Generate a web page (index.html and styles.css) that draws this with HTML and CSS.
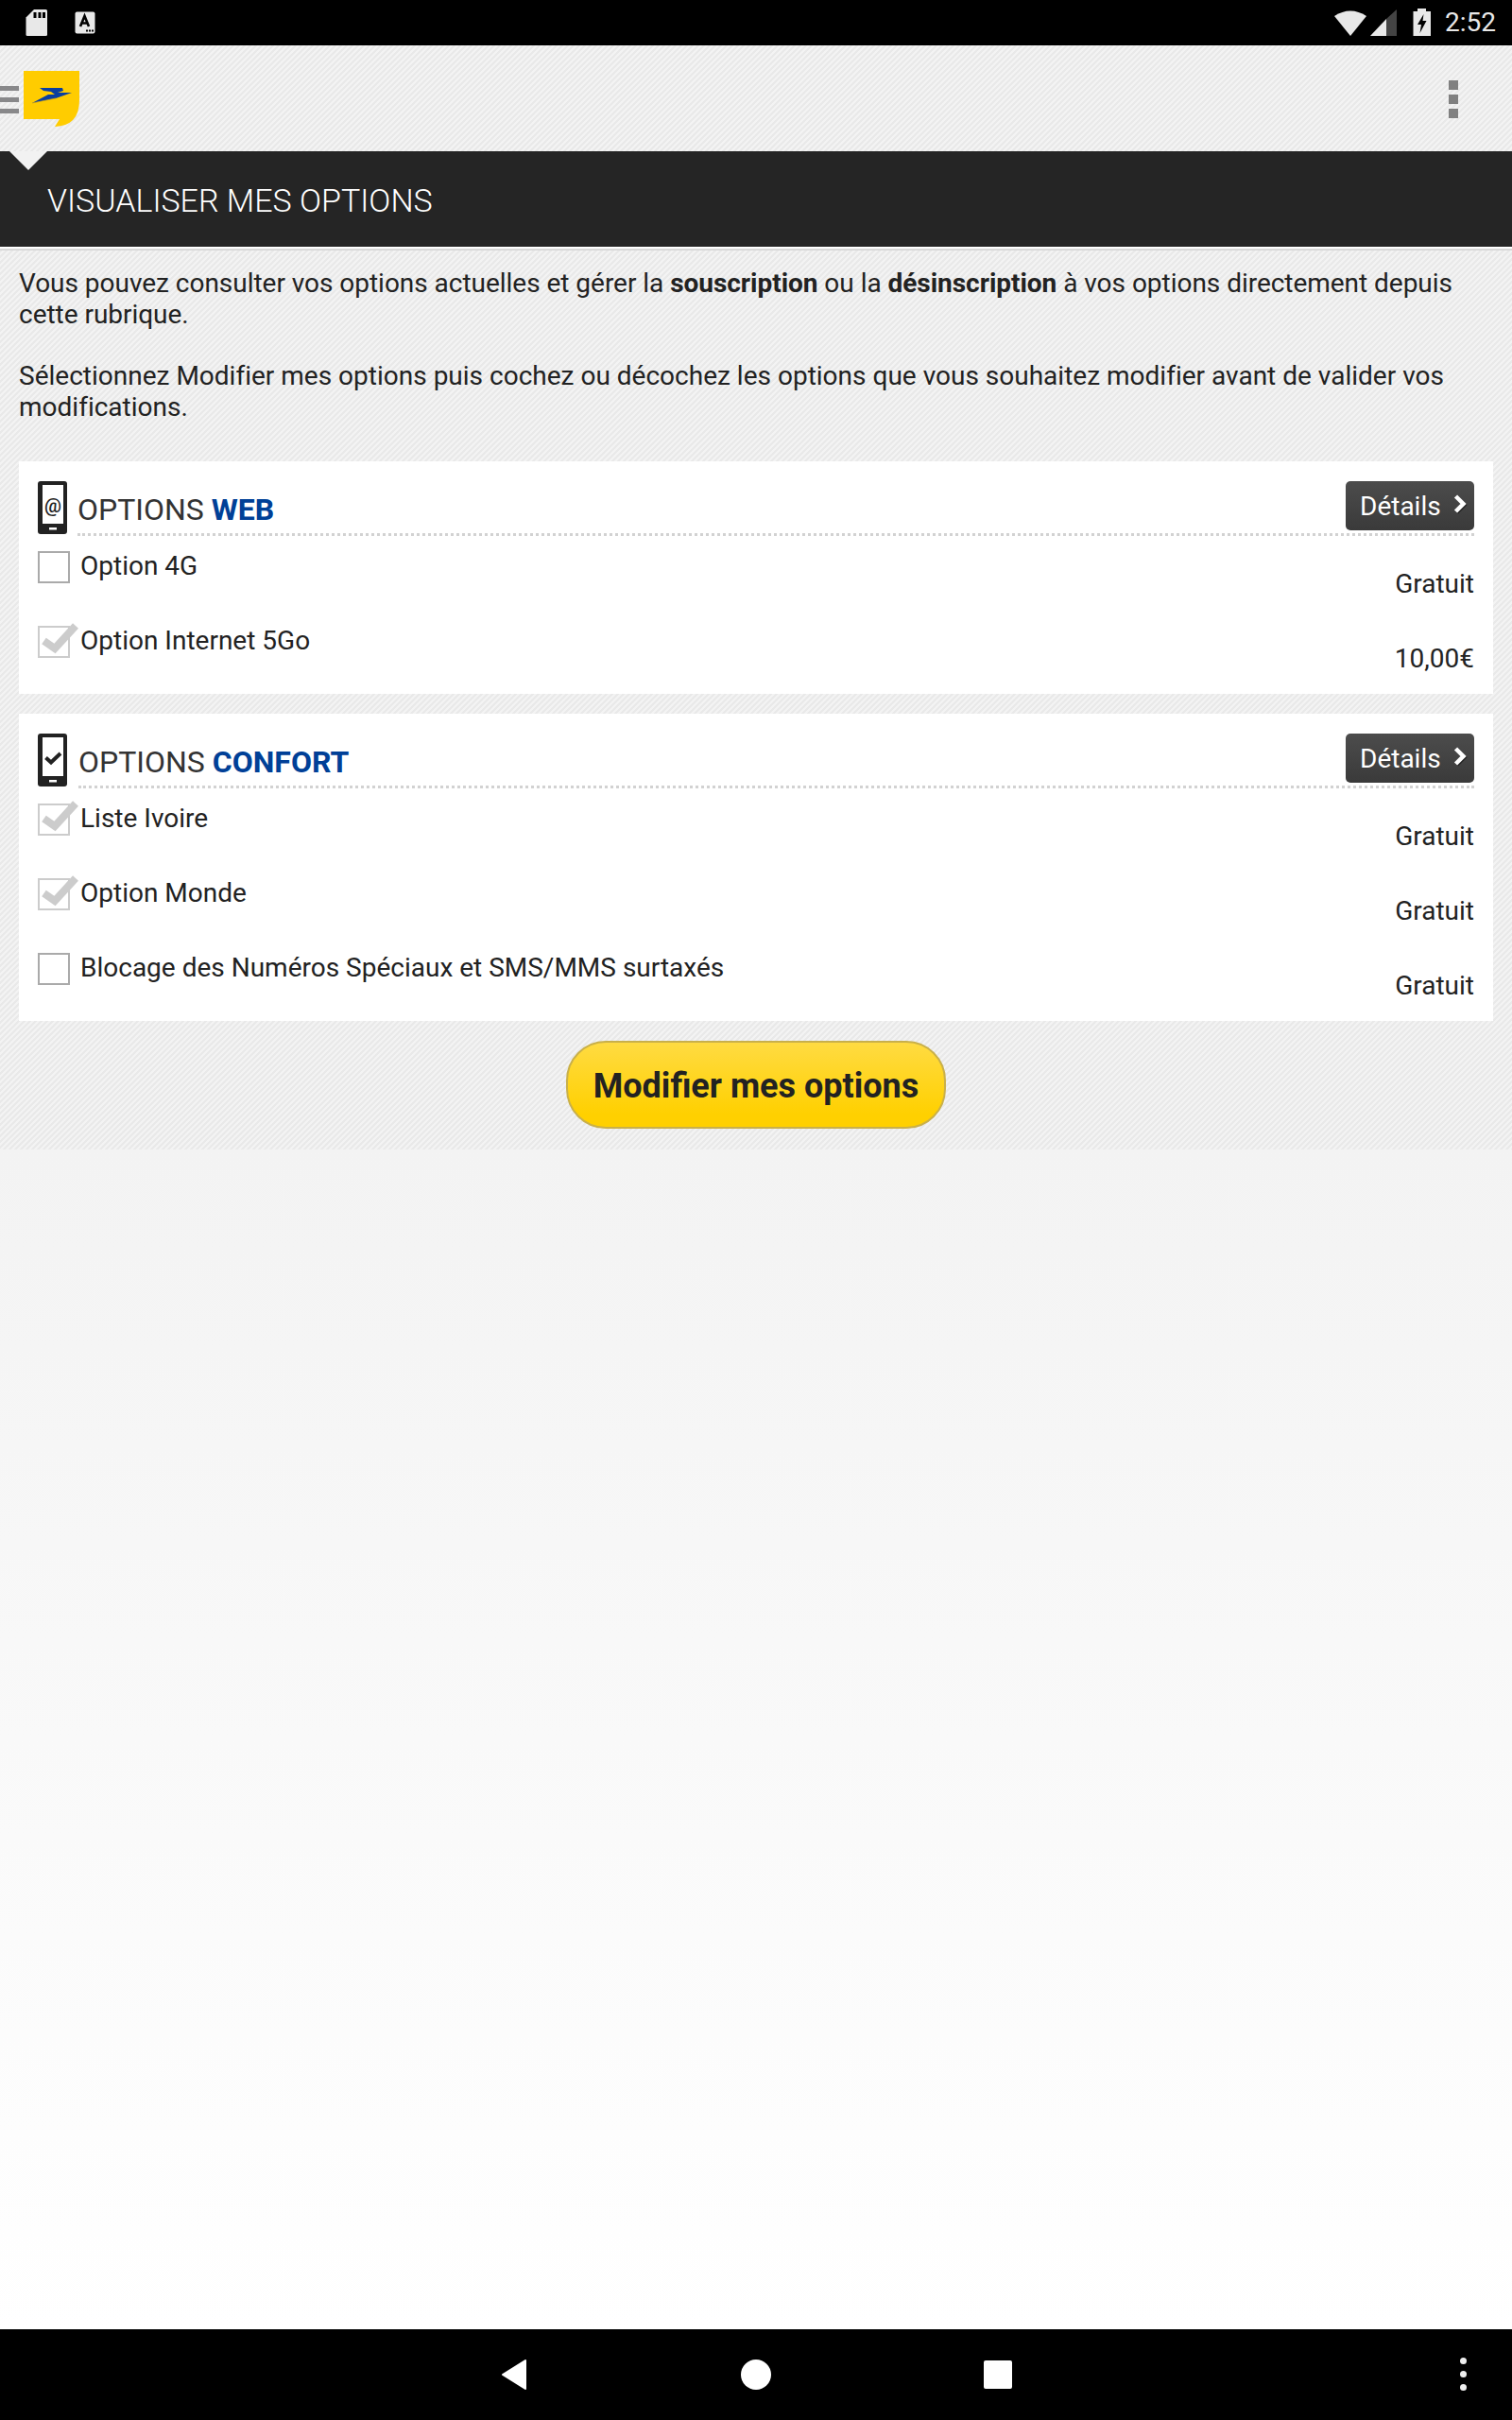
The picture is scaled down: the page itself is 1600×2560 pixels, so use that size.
FILE: index.html
```html
<!DOCTYPE html>
<html lang="fr">
<head>
<meta charset="utf-8">
<title>Visualiser mes options</title>
<link rel="stylesheet" href="styles.css">
</head>
<body>
<div class="app">
  <div class="statusbar">
    <div class="status-left">
      <svg class="ic-sd" width="24" height="28" viewBox="0 0 24 28"><path fill="#e8e8e8" d="M9 0H21.500Q23 0 23 1.500V26.500Q23 28 21.500 28H2Q.5 28 .5 26.500V8.500Z"/><path fill="#000" d="M8.500 3h3v6h-3zM13.500 3h3v6h-3zM18 3h3v6h-3z"/></svg>
      <svg class="ic-a" width="22" height="24" viewBox="0 0 22 24"><rect x=".5" y=".5" width="21" height="23" rx="2" fill="#e8e8e8"/><path fill="none" stroke="#000" stroke-width="2.600" d="M6 16 10.500 5 15 16M7.500 12.500h6"/><path fill="#000" d="M12 19.500h2v2h-2zM15 19.500h2v2h-2zM18 19.500h2v2h-2z"/></svg>
    </div>
    <div class="status-right">
      <svg class="ic-wifi" width="34" height="28" viewBox="0 0 34 28"><path fill="#e8e8e8" d="M0 7Q17-4 34 7L17 28Z"/></svg>
      <svg class="ic-signal" width="30" height="29" viewBox="0 0 30 29"><path fill="#444" d="M28 0V28H17V10Z"/><path fill="#e8e8e8" d="M17 10V28H0Z"/></svg>
      <svg class="ic-batt" width="20" height="30" viewBox="0 0 20 30"><path fill="#e8e8e8" d="M5 0H14V3H19V29H.5V3H5Z"/><path fill="#000" d="M11.500 6 5 17H9L7.500 26 14.500 13H10.500Z"/></svg>
      <span class="clock">2:52</span>
    </div>
  </div>

  <header class="topbar">
    <div class="burger"><i></i><i></i><i></i></div>
    <svg class="logo" width="60" height="60" viewBox="0 0 60 60">
      <path fill="#ffcc00" d="M0 0H59V31Q59 58 33 59L38 51H0Z"/>
      <path fill="#0a3fa0" d="M17 18H41L42 21 36 23 51 23 34 29 9 34 26 25H33L29 22 21 21Z"/>
      <path fill="none" stroke="#c9a21a" stroke-width=".7" d="M9 34 34 29"/>
    </svg>
    <div class="overflow"><i></i><i></i><i></i></div>
  </header>

  <div class="titlebar">
    <span class="notch"></span>
    <h1>VISUALISER MES OPTIONS</h1>
  </div>
  <div class="title-rule"></div>

  <main class="content">
    <p class="intro intro-first">Vous pouvez consulter vos options actuelles et gérer la <b>souscription</b> ou la <b>désinscription</b> à vos options directement depuis cette rubrique.</p>
    <p class="intro intro-second">Sélectionnez Modifier mes options puis cochez ou décochez les options que vous souhaitez modifier avant de valider vos modifications.</p>

    <section class="card">
      <div class="card-head">
        <svg class="phone" width="32" height="56" viewBox="0 0 32 56">
          <rect width="31" height="56" rx="3" fill="#222"/>
          <rect x="5" y="4" width="22" height="41" fill="#fff"/>
          <rect x="12" y="49" width="8" height="2.500" fill="#fff"/>
          <text class="at" x="16" y="33" text-anchor="middle">@</text>
        </svg>
        <h2>OPTIONS <b>WEB</b></h2>
        <a class="details">Détails<svg width="18" height="24" viewBox="0 0 18 24"><path fill="none" stroke="#222" stroke-width="4.500" d="M4.500 4 12.500 12 4.500 20"/><path fill="none" stroke="#fff" stroke-width="4.500" d="M3.500 3 11.500 11 3.500 19"/></svg></a>
      </div>
      <div class="row"><label><span class="box"></span>Option 4G</label><span class="price">Gratuit</span></div>
      <div class="row"><label><span class="box on"><svg viewBox="0 0 42 38" width="42" height="38"><path fill="none" stroke="#ccc" stroke-width="8" d="M6.500 20 18 28 40 4"/></svg></span>Option Internet 5Go</label><span class="price">10,00€</span></div>
    </section>

    <section class="card">
      <div class="card-head">
        <svg class="phone phone-check" width="32" height="56" viewBox="0 0 32 56">
          <rect width="31" height="56" rx="3" fill="#222"/>
          <rect x="5" y="4" width="22" height="41" fill="#fff"/>
          <rect x="12" y="49" width="8" height="2.500" fill="#fff"/>
          <path fill="none" stroke="#222" stroke-width="4" d="M8.500 25.500 14 30.500 24 21"/>
        </svg>
        <h2>OPTIONS <b>CONFORT</b></h2>
        <a class="details">Détails<svg width="18" height="24" viewBox="0 0 18 24"><path fill="none" stroke="#222" stroke-width="4.500" d="M4.500 4 12.500 12 4.500 20"/><path fill="none" stroke="#fff" stroke-width="4.500" d="M3.500 3 11.500 11 3.500 19"/></svg></a>
      </div>
      <div class="row"><label><span class="box on"><svg viewBox="0 0 42 38" width="42" height="38"><path fill="none" stroke="#ccc" stroke-width="8" d="M6.500 20 18 28 40 4"/></svg></span>Liste Ivoire</label><span class="price">Gratuit</span></div>
      <div class="row"><label><span class="box on"><svg viewBox="0 0 42 38" width="42" height="38"><path fill="none" stroke="#ccc" stroke-width="8" d="M6.500 20 18 28 40 4"/></svg></span>Option Monde</label><span class="price">Gratuit</span></div>
      <div class="row"><label><span class="box"></span>Blocage des Numéros Spéciaux et SMS/MMS surtaxés</label><span class="price">Gratuit</span></div>
    </section>

    <div class="actions"><a class="cta">Modifier mes options</a></div>
  </main>

  <div class="empty"></div>

  <nav class="navbar">
    <svg class="nav-back" width="28" height="32" viewBox="0 0 28 32"><path fill="#fff" stroke="#fff" stroke-width="2" stroke-linejoin="round" d="M2 16 26 1V31Z"/></svg>
    <span class="nav-home"></span>
    <span class="nav-recent"></span>
    <span class="nav-menu"><i></i><i></i><i></i></span>
  </nav>
</div>
</body>
</html>
```
FILE: styles.css
```css
* { box-sizing: border-box; }
html, body { margin: 0; padding: 0; }
body { font-family: Roboto, "Liberation Sans", sans-serif; color: #222; background: #fff; }
.app { width: 1600px; height: 2560px; display: flex; flex-direction: column; overflow: hidden; }

.statusbar { height: 48px; background: #000; display: flex; justify-content: space-between; align-items: center; padding: 0 17px 0 27px; flex: none; }
.status-left { display: flex; align-items: center; gap: 28px; }
.status-right { display: flex; align-items: center; }
.ic-signal { margin-left: 4px; }
.ic-batt { margin-left: 15px; }
.clock { margin-left: 14px; font-size: 28px; color: #e8e8e8; line-height: 48px; }

.topbar { flex: none; }
.topbar, .content {
  background-color: #f0f0f0;
  background-image: linear-gradient(135deg, #e9e9e9 25%, #f3f3f3 25%, #f3f3f3 50%, #e9e9e9 50%, #e9e9e9 75%, #f3f3f3 75%);
  background-size: 6px 6px;
}
.topbar { height: 112px; display: flex; justify-content: space-between; padding-top: 27px; }
.burger { width: 20px; padding-top: 16px; display: flex; flex-direction: column; gap: 7px; }
.burger i { display: block; height: 5px; background: #88888a; }
.logo { position: absolute; left: 25px; top: 75px; }
.overflow { margin: 10px 57px 0 0; display: flex; flex-direction: column; gap: 5px; }
.overflow i { display: block; width: 10px; height: 10px; background: #808080; }

.titlebar { height: 101px; background: #252525; flex: none; position: relative; padding: 0 50px; }
.notch { position: absolute; left: 10px; top: 0; border-left: 20px solid transparent; border-right: 20px solid transparent; border-top: 20px solid #f2f2f2; }
.titlebar h1 { margin: 0; font-size: 34px; font-weight: 300; color: #fff; line-height: 105px; }
.title-rule { height: 4px; background: #fff; border-bottom: 2px solid #d8d8d8; flex: none; }

.content { flex: none; height: 951px; padding: 18px 20px 0; }
.intro { margin: 0 0 32px; font-size: 28px; line-height: 33px; color: #222; }
.intro b { font-weight: 700; }
.intro-first { letter-spacing: -0.03px; }
.intro-second { letter-spacing: 0.005px; margin-bottom: 41px; }

.card { background: #fff; padding: 21px 20px 9px; margin-bottom: 21px; }
.card-head { position: relative; height: 58px; display: flex; align-items: flex-start; }
.phone { flex: none; }
.phone-check { margin-right: 1px; }
.at { font-family: Roboto, sans-serif; font-size: 20px; font-weight: 500; fill: #222; }
.card-head h2 { flex: 1; margin: 0 0 0 10px; height: 58px; padding-top: 13px; font-size: 32px; font-weight: 400; line-height: 34px; color: #333; border-bottom: 3px dotted #d2d2d2; }
.card-head h2 b { font-weight: 700; color: #004097; }
.details { position: absolute; right: 0; top: 0; width: 136px; height: 52px; border-radius: 5px; background: linear-gradient(#4c4c4c, #3a3a3a); color: #fff; font-size: 28px; line-height: 50px; padding: 2px 0 0 15px; display: flex; align-items: center; }
.details svg { margin-left: 12px; margin-top: -4px; }

.row { height: 79px; display: flex; justify-content: space-between; }
.row label { display: flex; align-items: flex-start; font-size: 28px; line-height: 33px; padding-top: 15px; }
.box { width: 34px; height: 34px; border: 2px solid #aaa; margin-right: 11px; margin-top: 1px; position: relative; flex: none; background: #fff; }
.box.on { border-color: #ccc; }
.box svg { position: absolute; left: -2px; top: -6px; overflow: visible; }
.price { font-size: 28px; line-height: 33px; padding-top: 34px; }

.actions { display: flex; justify-content: center; }
.cta { width: 402px; height: 93px; border-radius: 42px; border: 2px solid #c9b04a; background: linear-gradient(#ffdb42, #ffd000 85%); font-size: 36px; font-weight: 700; line-height: 92px; text-align: center; color: #222; }

.empty { flex: 1; background: linear-gradient(#f3f3f3, #fff); }

.navbar { height: 96px; background: #000; flex: none; position: relative; }
.nav-back { position: absolute; left: 530px; top: 32px; }
.nav-home { position: absolute; left: 784px; top: 32px; width: 32px; height: 32px; border-radius: 50%; background: #fff; }
.nav-recent { position: absolute; left: 1041px; top: 33px; width: 30px; height: 30px; border-radius: 2px; background: #fff; }
.nav-menu { position: absolute; left: 1545px; top: 30px; display: flex; flex-direction: column; gap: 7px; }
.nav-menu i { display: block; width: 7px; height: 7px; border-radius: 50%; background: #eee; }
```
